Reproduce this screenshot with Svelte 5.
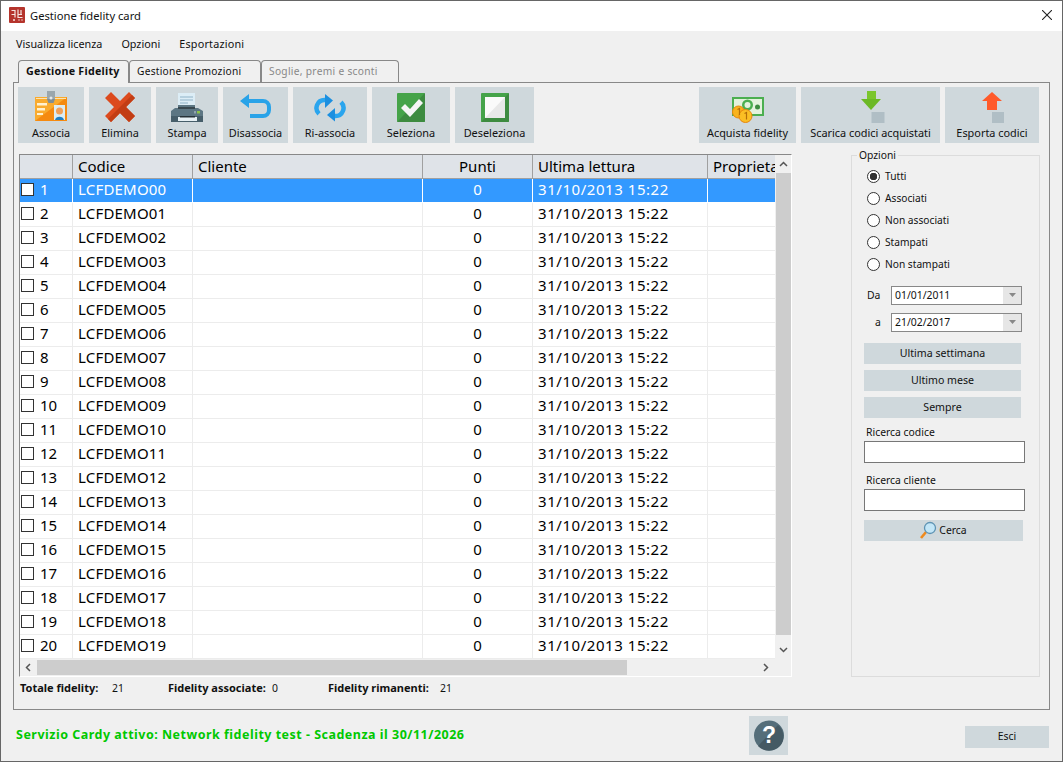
<script>
  const rows = Array.from({ length: 20 }, (_, i) => ({
    n: i + 1,
    code: 'LCFDEMO' + String(i).padStart(2, '0')
  }));
  const radios = ['Tutti', 'Associati', 'Non associati', 'Stampati', 'Non stampati'];
</script>

<div class="window">
  <header class="title">
    <svg class="logo" width="16" height="16" viewBox="0 0 16 16">
      <rect width="16" height="16" rx="1" fill="#b5342c"/>
      <path d="M2.500 3.500h3.500v7M2.500 7.500h3.500M9 2.500v8h4.500M12 3v4.500M9 7.500h4" stroke="#f6e4e0" stroke-width="1.200" fill="none"/>
      <path d="M4 13h2M9.500 13h1M12.500 13h1" stroke="#f6e4e0" stroke-width="1.500"/>
    </svg>
    <span class="title-text">Gestione fidelity card</span>
    <svg class="close" width="10" height="10" viewBox="0 0 10 10"><path d="M0 0l10 10M10 0L0 10" stroke="#222" stroke-width="1.1"/></svg>
  </header>

  <nav class="menu">
    <span>Visualizza licenza</span><span>Opzioni</span><span class="wide">Esportazioni</span>
  </nav>

  <div class="tabs">
    <div class="tab active">Gestione Fidelity</div>
    <div class="tab second">Gestione Promozioni</div>
    <div class="tab disabled">Soglie, premi e sconti</div>
  </div>

  <main class="panel">
    <div class="toolbar">
      <button class="tool w-associa">
        <svg width="34" height="34" viewBox="0 0 34 34">
          <rect x="1" y="7" width="32" height="24" fill="#f58a10"/>
          <path d="M1 7h32L1 31z" fill="#f9ab2e"/>
          <path d="M2 8.500h30" stroke="#fde3b0" stroke-width="1"/>
          <rect x="13" y="1" width="8" height="9" fill="#9aa7ad"/>
          <path d="M13 9h8l-1.500 4h-5z" fill="#7f8e95"/>
          <circle cx="17" cy="8" r="1.500" fill="#e4e9eb"/>
          <rect x="3" y="13" width="10" height="2.500" fill="#fff1d0"/><rect x="3" y="18" width="8" height="2.500" fill="#fff1d0"/><rect x="3" y="23" width="6" height="2" fill="#fff1d0"/>
          <rect x="20" y="15" width="11" height="15" fill="#dcecf2"/>
          <circle cx="25.500" cy="21" r="3.500" fill="#f0a05a"/>
          <path d="M21 30c.5-4.500 8.500-4.500 9 0z" fill="#1f7fc4"/>
        </svg>
        <span>Associa</span>
      </button>
      <button class="tool w-elimina">
        <svg width="34" height="34" viewBox="0 0 34 34">
          <path d="M8 2l9 9 9-9 6 6-9 9 9 9-6 6-9-9-9 9-6-6 9-9-9-9z" fill="#dc4a1d"/>
          <path d="M29 5l3 3-9 9 9 9-6 6-9-9-9 9-3-3z" fill="#c23d14"/>
        </svg>
        <span>Elimina</span>
      </button>
      <button class="tool w-stampa">
        <svg width="34" height="34" viewBox="0 0 34 34">
          <path d="M8 3h17v15H8z" fill="#dcedf6"/>
          <path d="M10 7h13M10 10h13M10 13h8" stroke="#8fb4c8" stroke-width="1.200"/>
          <path d="M5 18h3V15h17v3h3l5 3v9H1v-9z" fill="#5c7683"/>
          <rect x="8" y="17" width="17" height="2" fill="#37474f"/>
          <rect x="1" y="26" width="32" height="6" fill="#465e6a"/>
          <rect x="8" y="27" width="19" height="4" fill="#e6f0f4"/>
          <rect x="10" y="26" width="15" height="1.500" fill="#263238"/>
          <rect x="27" y="21" width="3" height="2.500" fill="#8bc34a"/>
          <rect x="24" y="21" width="2" height="2.500" fill="#90a4ae"/>
        </svg>
        <span>Stampa</span>
      </button>
      <button class="tool w-dis">
        <svg width="34" height="34" viewBox="0 0 34 34">
          <path d="M1 11L10 4v5h14a8 8 0 0 1 8 8v3a8 8 0 0 1-8 8H11v-4h13a4 4 0 0 0 4-4v-3a4 4 0 0 0-4-4H10v5z" fill="#29a3e8"/>
        </svg>
        <span>Disassocia</span>
      </button>
      <button class="tool w-ri">
        <svg width="34" height="34" viewBox="0 0 34 34">
          <path d="M13 10H11.500A8 8 0 0 0 6 23.800" stroke="#2aa5ee" stroke-width="4.500" fill="none"/>
          <path d="M12 4l8 6.500-8 7.500z" fill="#1b8fe0"/>
          <path d="M21 26H22.500A8 8 0 0 0 28 12.200" stroke="#2aa5ee" stroke-width="4.500" fill="none"/>
          <path d="M22 18l-8 7 8 6.500z" fill="#1b8fe0"/>
        </svg>
        <span>Ri-associa</span>
      </button>
      <button class="tool w-sel">
        <svg width="28" height="29" viewBox="0 0 28 29">
          <rect width="28" height="29" rx="1" fill="#45a349"/>
          <path d="M28 0v28a1 1 0 0 1-1 1H0z" fill="#3d8b40"/>
          <path d="M4 15l4-4 5 5L22 6l4 4-13 14z" fill="#f5f5f5"/>
        </svg>
        <span>Seleziona</span>
      </button>
      <button class="tool w-desel">
        <svg width="28" height="29" viewBox="0 0 28 29">
          <rect width="28" height="29" rx="1" fill="#45a349"/>
          <path d="M28 0v28a1 1 0 0 1-1 1H0z" fill="#3d8b40"/>
          <rect x="4" y="4" width="20" height="21" fill="#fafafa"/>
          <path d="M24 4v21H4z" fill="#e8e8e8"/>
        </svg>
        <span>Deseleziona</span>
      </button>

      <div class="toolbar-right">
        <button class="tool w-acq">
          <svg width="34" height="34" viewBox="0 0 34 34">
            <rect x="1" y="7" width="32" height="19" fill="#4caf50"/>
            <rect x="3" y="9" width="28" height="15" fill="#e4f2dd"/>
            <circle cx="16.500" cy="15" r="5.500" fill="#4caf50"/><circle cx="16.500" cy="15" r="3" fill="#e4f2dd"/>
            <circle cx="26.500" cy="17" r="2.500" fill="#3d8b40"/>
            <circle cx="7.500" cy="22" r="6" fill="#f9b31e" stroke="#e8860c"/>
            <circle cx="14.500" cy="26" r="6.500" fill="#fbbf24" stroke="#e8860c"/>
            <path d="M6.500 19.500l2-1v6.500M13.500 23.500l2-1v7" stroke="#b56f08" stroke-width="1.200" fill="none"/>
          </svg>
          <span>Acquista fidelity</span>
        </button>
        <button class="tool w-scar">
          <svg width="34" height="34" viewBox="0 0 34 34">
            <rect x="13" y="1" width="9" height="9" fill="#7bc62d"/>
            <path d="M7 9h20L17 20z" fill="#6cb926"/>
            <rect x="17.500" y="22" width="13" height="11" fill="#b0bec5"/>
          </svg>
          <span>Scarica codici acquistati</span>
        </button>
        <button class="tool w-esp">
          <svg width="34" height="34" viewBox="0 0 34 34">
            <path d="M7 11L17 2l10 9h-5v9H12v-9z" fill="#ff5a2b"/>
            <rect x="17" y="22" width="12" height="11" fill="#b0bec5"/>
          </svg>
          <span>Esporta codici</span>
        </button>
      </div>
    </div>

    <div class="content">
      <section class="grid-wrap">
        <div class="grid-body">
          <div class="grid-main">
            <div class="row head">
              <div></div><div>Codice</div><div>Cliente</div><div class="c">Punti</div><div>Ultima lettura</div><div>Proprietario</div>
            </div>
            {#each rows as r, i}
              <div class="row" class:selected={i === 0}>
                <div class="first"><i class="check"></i>{r.n}</div>
                <div class="code">{r.code}</div>
                <div></div>
                <div class="c">0</div>
                <div class="when">31/10/2013 15:22</div>
                <div></div>
              </div>
            {/each}
          </div>
          <div class="vbar">
            <svg class="arrow" width="9" height="6" viewBox="0 0 9 6"><path d="M1 5l3.500-3.500L8 5" stroke="#555" stroke-width="1.500" fill="none"/></svg>
            <div class="vthumb"></div>
            <svg class="arrow" width="9" height="6" viewBox="0 0 9 6"><path d="M1 1l3.500 3.500L8 1" stroke="#555" stroke-width="1.500" fill="none"/></svg>
          </div>
        </div>
        <div class="hbar">
          <svg class="harrow" width="6" height="9" viewBox="0 0 6 9"><path d="M5 1L1.500 4.500 5 8" stroke="#555" stroke-width="1.500" fill="none"/></svg>
          <div class="htrack"><div class="hthumb"></div></div>
          <svg class="harrow" width="6" height="9" viewBox="0 0 6 9"><path d="M1 1l3.500 3.500L1 8" stroke="#555" stroke-width="1.500" fill="none"/></svg>
        </div>
      </section>

      <fieldset class="options">
        <legend>Opzioni</legend>
        <div class="radios">
          {#each radios as label, i}
            <div class="radio"><i class="dot" class:on={i === 0}></i>{label}</div>
          {/each}
        </div>
        <div class="date d1"><span class="lbl-da">Da</span><div class="dbox"><span>01/01/2011</span><b><svg width="7" height="4" viewBox="0 0 7 4"><path d="M0 0h7L3.500 4z" fill="#888"/></svg></b></div></div>
        <div class="date d2"><span class="lbl-a">a</span><div class="dbox"><span>21/02/2017</span><b><svg width="7" height="4" viewBox="0 0 7 4"><path d="M0 0h7L3.500 4z" fill="#888"/></svg></b></div></div>
        <button class="opt first-opt">Ultima settimana</button>
        <button class="opt">Ultimo mese</button>
        <button class="opt">Sempre</button>
        <div class="search-label sl1">Ricerca codice</div>
        <div class="search"></div>
        <div class="search-label sl2">Ricerca cliente</div>
        <div class="search"></div>
        <button class="cerca">
          <svg width="17" height="18" viewBox="0 0 17 18">
            <path d="M1 17l5-6" stroke="#ef8a1d" stroke-width="2.600"/>
            <circle cx="10" cy="7" r="5.500" fill="#c3e6f7" stroke="#5e93b3" stroke-width="1.300"/>
          </svg>
          Cerca
        </button>
      </fieldset>
    </div>

    <div class="stats">
      <b class="s1">Totale fidelity:</b><span class="v1">21</span>
      <b class="s2">Fidelity associate:</b><span class="v2">0</span>
      <b class="s3">Fidelity rimanenti:</b><span class="v3">21</span>
    </div>
  </main>

  <footer class="footer">
    <div class="service">Servizio Cardy attivo: Network fidelity test - Scadenza il 30/11/2026</div>
    <button class="help">
      <svg width="30" height="31" viewBox="0 0 30 31">
        <circle cx="15" cy="15.500" r="15" fill="#546e7a"/>
        <path d="M26 26A15 15 0 0 1 4 26L24 5A15 15 0 0 1 26 26z" fill="#455a64"/>
        <text x="15" y="23" text-anchor="middle" class="q">?</text>
      </svg>
    </button>
    <button class="esci">Esci</button>
  </footer>
</div>

<style>
  :global(body) { margin: 0; background: #f0f0f0; }
  .window {
    box-sizing: border-box;
    width: 1063px; height: 762px;
    border: 1px solid #666;
    background: #f0f0f0;
    font-family: "Noto Sans", "Open Sans", sans-serif;
    font-size: 11px;
    color: #111;
    display: flex; flex-direction: column;
    overflow: hidden;
  }
  button { font: inherit; color: inherit; border: 0; margin: 0; padding: 0; background: #cfd8dc; }

  .title { box-sizing: border-box; height: 30px; padding-bottom: 2px; background: #fff; display: flex; align-items: center; flex: none; }
  .logo { margin-left: 8px; }
  .title-text { margin-left: 5px; font-size: 11.2px; }
  .close { margin-left: auto; margin-right: 10px; }

  .menu { height: 25px; flex: none; display: flex; align-items: center; padding-left: 15px; gap: 19px; font-size: 10.8px; }
  .menu .wide { letter-spacing: .2px; }

  .tabs { height: 24px; flex: none; display: flex; align-items: flex-end; padding-left: 17px; margin-top: 2px; position: relative; z-index: 1; }
  .tab { box-sizing: border-box; height: 22px; border: 1px solid #888; border-bottom: 0; border-radius: 4px 4px 0 0; padding: 3px 0 0 7px; letter-spacing: .25px; font-size: 10.2px; }
  .tab.active { width: 111px; height: 23px; font-weight: 700; background: #f0f0f0; margin-bottom: -1px; font-size: 10.7px; }
  .tab.second { width: 132px; }
  .tab.disabled { width: 138px; color: #888; letter-spacing: .3px; }

  .panel { box-sizing: border-box; margin-left: 12px; width: 1037px; height: 628px; flex: none; border: 1px solid #888; padding: 4px 10px 0 4px; display: flex; flex-direction: column; }

  .toolbar { display: flex; gap: 5px; height: 56px; flex: none; }
  .toolbar-right { margin-left: auto; display: flex; gap: 5px; }
  .tool { height: 56px; display: flex; flex-direction: column; align-items: center; justify-content: flex-end; padding-bottom: 3px; box-sizing: border-box; background: #cfd8dc; font-size: 10.9px; gap: 2px; line-height: 14px; }
  .tool svg { flex: none; }
  .w-associa { width: 66px; } .w-elimina { width: 62px; } .w-stampa { width: 62px; }
  .w-dis { width: 65px; } .w-ri { width: 74px; } .w-sel { width: 78px; } .w-desel { width: 79px; }
  .w-sel svg, .w-desel svg { margin-bottom: 2px; }
  .w-acq { width: 97px; } .w-scar { width: 139px; } .w-esp { width: 94px; }

  .content { display: flex; margin-top: 11px; height: 523px; flex: none; }
  .grid-wrap { box-sizing: border-box; width: 773px; height: 523px; margin-left: 1px; border: 1px solid #fff; border-top-color: #888; border-left-color: #888; display: flex; flex-direction: column; background: #f0f0f0; }
  .grid-body { display: flex; height: 504px; flex: none; }
  .grid-main { width: 755px; flex: none; overflow: hidden; background: #fff; }
  .row { display: grid; grid-template-columns: 53px 120px 230px 110px 175px 67px; height: 24px; box-sizing: border-box; border-bottom: 1px solid #ececec; font-size: 15px; line-height: 21px; color: #000; }
  .row > div { box-sizing: border-box; border-right: 1px solid #ececec; padding-left: 5px; white-space: nowrap; overflow: hidden; }
  .row .c { text-align: center; padding-left: 0; }
  .row .code { letter-spacing: .2px; }
  .row .when { letter-spacing: .55px; }
  .row.head { background: #dfe3e8; border-bottom: 1px solid #a0a0a0; line-height: 23px; }
  .row.head > div { border-right: 1px solid #a0a0a0; }
  .row.head > div:last-child, .row > div:last-child { border-right: 0; }
  .row.selected { background: #3399ff; color: #fff; border-bottom-color: #fff; }
  .row.selected > div { border-right-color: #fff; }
  .row .first { padding-left: 1px; }
  .check { display: inline-block; box-sizing: border-box; width: 13px; height: 13px; border: 1px solid #333; background: #fff; margin-right: 6px; vertical-align: -1px; }

  .vbar { width: 16px; display: flex; flex-direction: column; align-items: center; background: #f0f0f0; }
  .arrow { margin: 6px 0; flex: none; }
  .vthumb { width: 15px; flex: 1; background: #cdcdcd; margin-bottom: 6px; height: 450px; }
  .hbar { height: 17px; display: flex; align-items: center; flex: none; padding: 0 22px 0 5px; }
  .harrow { flex: none; }
  .htrack { flex: 1; margin: 0 6px; height: 15px; }
  .hthumb { width: 590px; height: 15px; background: #cdcdcd; }

  .options { box-sizing: border-box; margin: -5px 0 0 59px; width: 189px; height: 528px; border: 1px solid #dcdcdc; padding: 0; flex: none; }
  legend { margin-left: 5px; padding: 0 2px; font-size: 10.3px; line-height: 12px; }
  .radios { padding: 4px 0 0 15px; }
  .radio { display: flex; align-items: center; height: 22px; font-size: 10.2px; }
  .dot { box-sizing: border-box; width: 13px; height: 13px; border-radius: 50%; border: 1px solid #333; background: #fff; margin-right: 5px; display: inline-block; }
  .dot.on { background: radial-gradient(circle, #333 0 3.5px, #fff 4px); }
  .date { display: flex; align-items: center; height: 20px; font-size: 10.4px; }
  .d1 { margin-top: 10px; }
  .d2 { margin-top: 7px; }
  .lbl-da { width: 24px; margin-left: 15px; }
  .lbl-a { width: 16px; margin-left: 23px; }
  .dbox { box-sizing: border-box; width: 131px; height: 19px; border: 1px solid #888; background: #fff; display: flex; align-items: center; padding-left: 3px; }
  .dbox span { flex: 1; }
  .dbox b { width: 18px; height: 100%; background: #e6e6e6; display: flex; align-items: center; justify-content: center; }
  .opt { display: block; width: 157px; height: 21px; margin: 6px 0 0 12px; font-size: 10.6px; line-height: 20px; padding-bottom: 1px; }
  .first-opt { margin-top: 11px; }
  .search-label { margin-left: 14px; font-size: 10.4px; line-height: 14px; }
  .sl1 { margin-top: 7px; }
  .sl2 { margin-top: 10px; }
  .search { box-sizing: border-box; width: 161px; height: 22px; margin: 2px 0 0 12px; border: 1px solid #777; background: #fff; }
  .cerca { display: flex; align-items: center; justify-content: center; gap: 2px; width: 159px; height: 21px; margin: 9px 0 0 12px; font-size: 10.4px; padding-bottom: 1px; box-sizing: border-box; }

  .stats { height: 20px; font-size: 11px; line-height: 20px; margin-top: 1px; display: flex; align-items: baseline; padding-left: 2px; }
  .stats b { font-weight: 700; white-space: nowrap; }
  .stats span { font-size: 10.4px; }
  .s1 { width: 92px; flex: none; } .v1 { width: 56px; flex: none; } .s2 { width: 104px; flex: none; } .v2 { width: 56px; flex: none; } .s3 { width: 112px; flex: none; }

  .footer { flex: 1; display: flex; align-items: center; position: relative; padding-bottom: 3px; }
  .service { margin-left: 15px; font-size: 12.5px; font-weight: 700; color: #00c800; letter-spacing: .49px; }
  .help { position: absolute; left: 748px; top: 6px; width: 39px; height: 39px; display: flex; align-items: center; justify-content: center; }
  .q { font: 700 23px "Liberation Sans", sans-serif; fill: #fff; }
  .esci { position: absolute; left: 964px; top: 16px; width: 84px; height: 22px; font-size: 10.4px; padding-bottom: 2px; box-sizing: border-box; }
</style>
